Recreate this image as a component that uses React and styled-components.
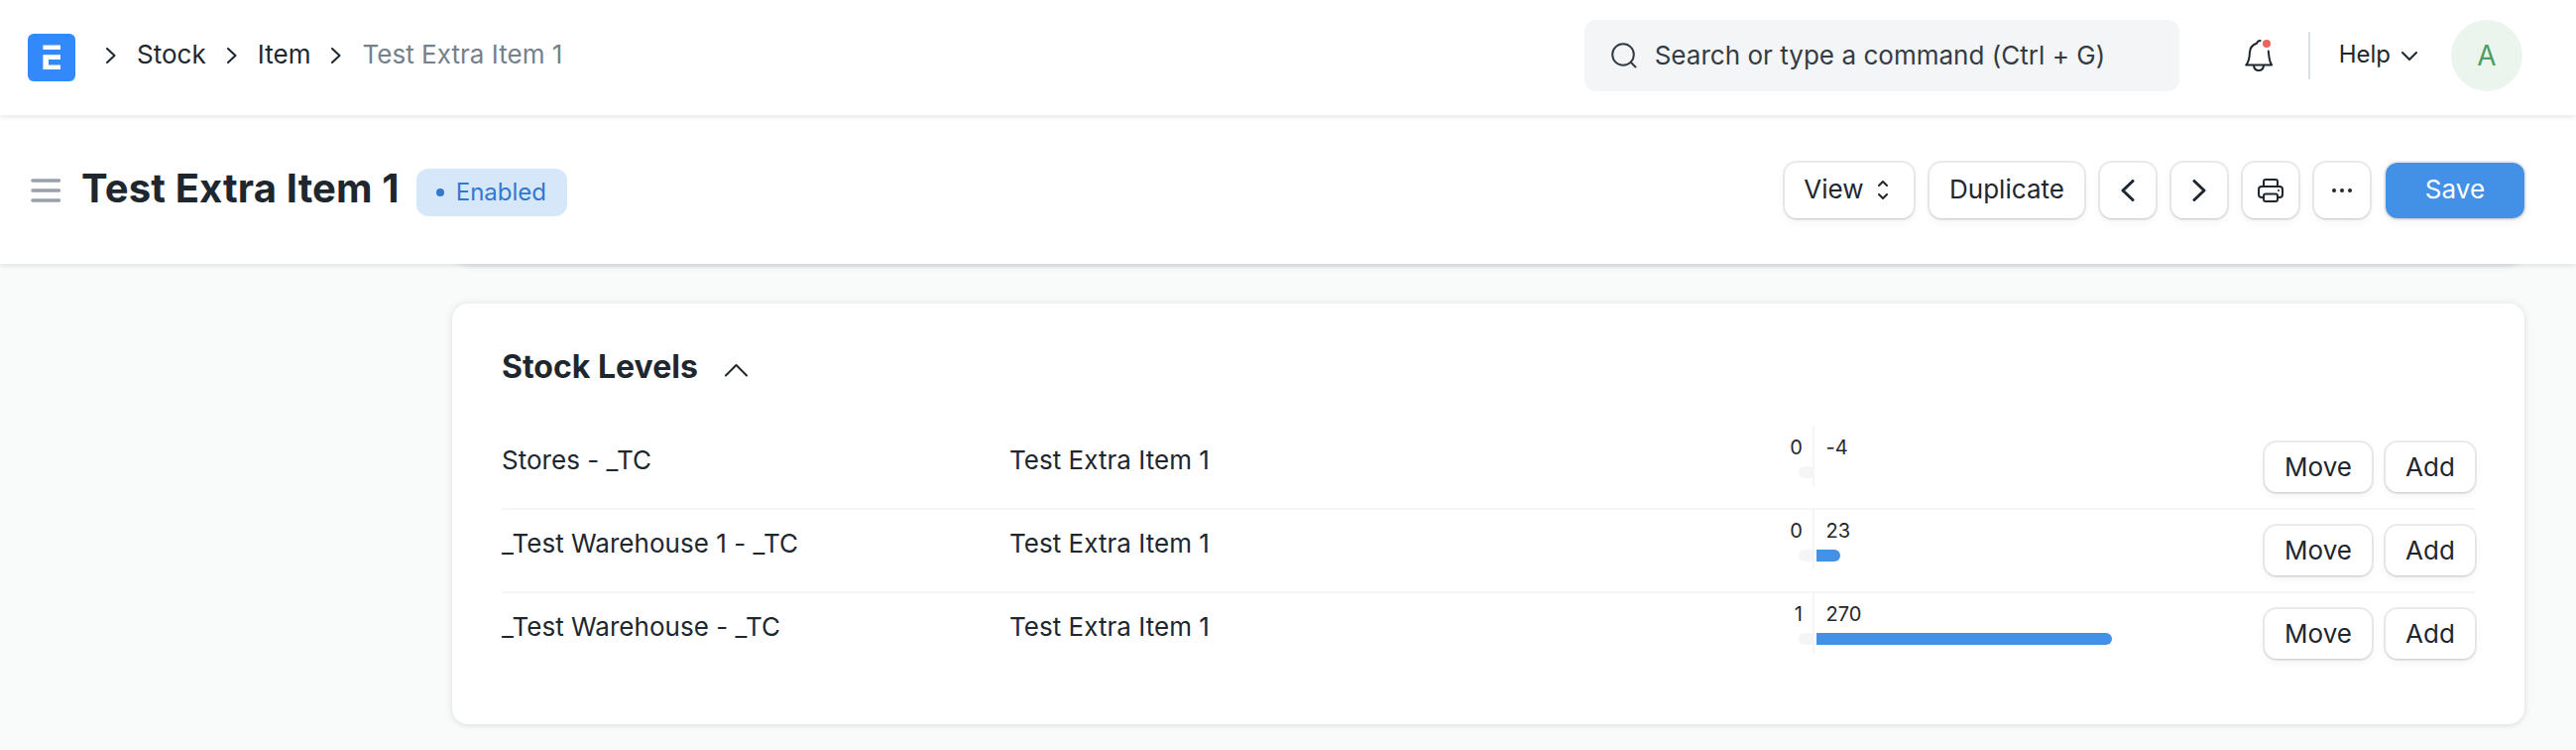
import React from "react";
import styled, { createGlobalStyle } from "styled-components";

const Global = createGlobalStyle`
  *, *::before, *::after { box-sizing: border-box; }
  body { margin: 0; background: #f9fafa; }
`;

const Page = styled.div`
  height: 756px;
  overflow: hidden;
  background: #f9fafa;
  color: #1f272e;
  font-family: Inter, "Liberation Sans", sans-serif;
  font-size: 26px;
  line-height: 40px;
  font-weight: 400;
  letter-spacing: 0.03px;
  -webkit-font-smoothing: antialiased;
`;

const Navbar = styled.header`
  position: relative;
  z-index: 3;
  display: flex;
  align-items: center;
  height: 116px;
  padding: 0 54px 4px 28px;
  background: #fff;
  box-shadow: 0 2px 4px rgba(25, 39, 52, 0.05), 0 0 8px rgba(25, 39, 52, 0.1);
`;

const Logo = styled.svg`
  width: 48px;
  height: 48px;
  margin: 4px 31px 0 0;
  flex: none;
`;

const Crumbs = styled.nav`
  display: flex;
  align-items: center;
  flex: 1;
`;

const Crumb = styled.span`
  color: ${(p) => (p.$last ? "#74808b" : "#1f272e")};
  margin: -2px 21px 0 21px;
`;

const Icon = styled.svg`
  display: block;
  flex: none;
  fill: none;
  stroke: ${(p) => p.$color || "#1f272e"};
  stroke-width: ${(p) => p.$weight || 2};
  stroke-linecap: round;
  stroke-linejoin: round;
`;

const Search = styled.div`
  display: flex;
  align-items: center;
  gap: 18px;
  width: 600px;
  height: 72px;
  padding-left: 27px;
  margin-right: 65px;
  border-radius: 12px;
  background: #f4f5f6;
  color: #333c44;
`;

const Divider = styled.div`
  width: 2px;
  height: 48px;
  margin: 0 29px 0 35px;
  background: #dce0e3;
`;

const Help = styled.div`
  display: flex;
  align-items: center;
  font-size: 24px;
  letter-spacing: 0;
  gap: 11px;
  margin-right: 34px;
`;

const HelpText = styled.span`
  margin-top: -2px;
`;

const Avatar = styled.div`
  display: flex;
  align-items: center;
  justify-content: center;
  width: 72px;
  height: 72px;
  border-radius: 50%;
  background: #ebf5ee;
  color: #4f9d62;
  font-size: 28px;
  letter-spacing: 0;
`;

const PageHead = styled.div`
  position: relative;
  z-index: 2;
  display: flex;
  align-items: center;
  height: 150px;
  padding: 2px 52px 0 30px;
  background: #fff;
  box-shadow: 0 2px 4px rgba(25, 39, 52, 0.05), 0 0 8px rgba(25, 39, 52, 0.1);
`;

const Title = styled.h1`
  margin: -4px 17px 0 20px;
  font-size: 40px;
  line-height: 48px;
  font-weight: 700;
  letter-spacing: 0.15px;
`;

const Badge = styled.div`
  display: flex;
  align-items: center;
  gap: 12px;
  height: 48px;
  margin-top: 4px;
  padding: 0 21px 0 20px;
  border-radius: 12px;
  background: #d6e7f9;
  color: #3278cd;
  font-size: 24px;
  letter-spacing: 0;
  &::before {
    content: "";
    width: 8px;
    height: 8px;
    border-radius: 50%;
    background: #3278cd;
  }
`;

const BadgeText = styled.span`
  margin-top: -1px;
`;

const Actions = styled.div`
  display: flex;
  gap: 16px;
  margin-left: auto;
`;

const Button = styled.button`
  display: flex;
  align-items: center;
  justify-content: center;
  gap: 14px;
  width: ${(p) => p.$width}px;
  height: ${(p) => p.$height || 56}px;
  padding: 0 ${(p) => p.$inset || 0}px ${(p) => p.$lift || 0}px 0;
  border: 0;
  border-radius: 12px;
  background: ${(p) => (p.$primary ? "#4390e7" : "#fff")};
  color: ${(p) => (p.$primary ? "#fff" : "#1f272e")};
  font: inherit;
  letter-spacing: inherit;
  box-shadow: 0 1px 0 0 rgba(0, 0, 0, 0.05), 0 0 0 2px rgba(0, 0, 0, 0.08),
    0 4px 8px 0 rgba(0, 0, 0, 0.05);
`;

const Content = styled.main`
  padding: 0 52px 0 456px;
`;

const CardBase = styled.section`
  border-radius: 16px;
  background: #fff;
  box-shadow: 0 2px 4px rgba(25, 39, 52, 0.05), 0 0 8px rgba(25, 39, 52, 0.1);
`;

const PreviousCard = styled(CardBase)`
  height: 100px;
  margin: -100px 0 40px;
`;

const Card = styled(CardBase)`
  height: 424px;
  padding: 40px 50px 0;
`;

const SectionHead = styled.div`
  display: flex;
  align-items: center;
  gap: 27px;
  height: 84px;
  padding-bottom: 36px;
`;

const SectionTitle = styled.h2`
  margin: 0;
  font-size: 32px;
  line-height: 48px;
  font-weight: 700;
  letter-spacing: 0;
`;

const Toggle = styled(Icon)`
  margin-top: 6px;
`;

const Row = styled.div`
  display: grid;
  grid-template-columns: 512px 796px 1fr auto;
  align-items: start;
  height: 84px;
  border-bottom: 2px solid ${(p) => (p.$last ? "transparent" : "#f4f5f6")};
`;

const Cell = styled.div`
  padding-top: 14px;
`;

const Levels = styled.div`
  display: grid;
  grid-template-columns: 16px 1fr;
  height: 60px;
  font-size: 20px;
  line-height: 24px;
`;

const Reserved = styled.div`
  display: flex;
  flex-direction: column;
  align-items: flex-end;
  gap: 7px;
  height: 60px;
  padding-top: 9px;
  border-right: 2px solid #f4f5f6;
`;

const Actual = styled.div`
  display: flex;
  flex-direction: column;
  gap: 7px;
  padding: 9px 0 0 2px;
`;

const Count = styled.span`
  height: 24px;
  padding: ${(p) => (p.$left ? "0 10px 0 0" : "0 0 0 9.5px")};
`;

const Bar = styled.div`
  width: ${(p) => (p.$reserved ? "14px" : "100%")};
  height: 12px;
  border-radius: ${(p) => (p.$reserved ? "6px 0 0 6px" : "0 6px 6px 0")};
  background: ${(p) => (p.$reserved ? "#f4f5f6" : "#4390e7")};
`;

const RowActions = styled.div`
  display: flex;
  gap: 14px;
  padding-top: 16px;
`;

const Chevron = ({ dir, ...rest }) => (
  <Icon width="14" height="22" viewBox="0 0 14 22" {...rest}>
    <path d={dir === "left" ? "M12 1.5L2 11L12 20.5" : "M2 1.5L12 11L2 20.5"} />
  </Icon>
);

const CrumbArrow = () => (
  <Icon width="10" height="16" viewBox="0 0 10 16">
    <path d="M1 1L8.5 8L1 15" />
  </Icon>
);

const rows = [
  { warehouse: "Stores - _TC", reserved: 0, actual: -4, width: 0 },
  { warehouse: "_Test Warehouse 1 - _TC", reserved: 0, actual: 23, width: 24 },
  { warehouse: "_Test Warehouse - _TC", reserved: 1, actual: 270, width: 298 },
];

export default function App() {
  return (
    <Page>
      <Global />
      <Navbar>
        <Logo viewBox="0 0 48 48">
          <rect width="48" height="48" rx="6" fill="#3389f9" />
          <path d="M15.4 11.4H33V16H15.4zM15.4 21.2H33V26H21V31.6H33V36H15.4z" fill="#fff" />
        </Logo>
        <Crumbs>
          <CrumbArrow />
          <Crumb>Stock</Crumb>
          <CrumbArrow />
          <Crumb>Item</Crumb>
          <CrumbArrow />
          <Crumb $last>Test Extra Item 1</Crumb>
        </Crumbs>
        <Search>
          <Icon width="26" height="26" viewBox="0 0 26 26" $color="#333c44">
            <circle cx="12" cy="12" r="10.8" />
            <path d="M19.7 19.7L24.5 24.5" />
          </Icon>
          Search or type a command (Ctrl + G)
        </Search>
        <Icon width="30" height="34" viewBox="0 0 30 34">
          <path d="M16.6 2C14.5 2 13.6 3 12.9 4.8C8 6.5 6.1 9.5 5.9 14C5.7 19 5.6 23 2.2 26.6H28.2C25.4 23 25.4 18 24.8 12.6" />
          <path d="M10 27.5C10.5 30.4 12.5 32 15 32C17.5 32 19.5 30.4 20 27.5" />
          <circle cx="23" cy="5" r="4" fill="#ec645e" stroke="none" />
        </Icon>
        <Divider />
        <Help>
          <HelpText>Help</HelpText>
          <Icon width="16" height="10" viewBox="0 0 16 10">
            <path d="M1 2L8 9L15 2" />
          </Icon>
        </Help>
        <Avatar>A</Avatar>
      </Navbar>

      <PageHead>
        <Icon width="32" height="26" viewBox="0 0 32 26" $color="#98a1a9" $weight={3.6}>
          <path d="M3 3H29.5M3 13H29.5M3 23H29.5" />
        </Icon>
        <Title>Test Extra Item 1</Title>
        <Badge>
          <BadgeText>Enabled</BadgeText>
        </Badge>
        <Actions>
          <Button $width={130} $lift={2} $inset={7}>
            View
            <Icon width="10" height="20" viewBox="0 0 10 20">
              <path d="M1 6L5 2L9 6M1 15L5 19L9 15" />
            </Icon>
          </Button>
          <Button $width={156} $lift={2}>Duplicate</Button>
          <Button $width={56}><Chevron dir="left" $weight={3} /></Button>
          <Button $width={56}><Chevron dir="right" $weight={3} /></Button>
          <Button $width={56}>
            <Icon width="26" height="24" viewBox="0 0 26 24">
              <path d="M6 8V3Q6 1 8 1H18Q20 1 20 3V8M6 19H4Q1 19 1 16V11Q1 8 4 8H22Q25 8 25 11V16Q25 19 22 19H20" />
              <rect x="6" y="15.5" width="14" height="7.5" rx="2" />
              <path d="M21 12H21.01" />
            </Icon>
          </Button>
          <Button $width={56}>
            <Icon width="20" height="4" viewBox="0 0 20 4" $weight={4}>
              <path d="M2 2H2.01M10 2H10.01M18 2H18.01" />
            </Icon>
          </Button>
          <Button $width={140} $lift={2} $primary>Save</Button>
        </Actions>
      </PageHead>

      <Content>
        <PreviousCard />
        <Card>
          <SectionHead>
            <SectionTitle>Stock Levels</SectionTitle>
            <Toggle width="23" height="14" viewBox="0 0 23 14">
              <path d="M1 12.5L11.5 2L22 12.5" />
            </Toggle>
          </SectionHead>
          {rows.map((row, i) => (
            <Row key={row.warehouse} $last={i === rows.length - 1}>
              <Cell>{row.warehouse}</Cell>
              <Cell>Test Extra Item 1</Cell>
              <Levels>
                <Reserved>
                  <Count $left>{row.reserved}</Count>
                  <Bar $reserved />
                </Reserved>
                <Actual>
                  <Count>{row.actual}</Count>
                  <Bar style={{ width: row.width }} />
                </Actual>
              </Levels>
              <RowActions>
                <Button $width={108} $height={50}>Move</Button>
                <Button $width={90} $height={50}>Add</Button>
              </RowActions>
            </Row>
          ))}
        </Card>
      </Content>
    </Page>
  );
}
